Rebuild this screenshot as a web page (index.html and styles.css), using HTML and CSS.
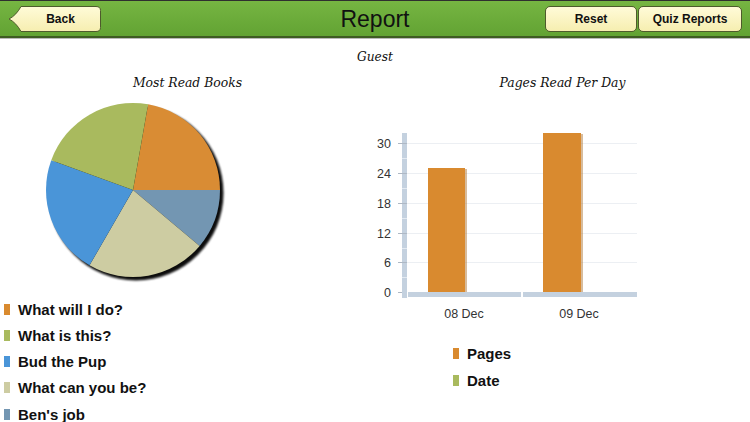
FILE: index.html
```html
<!DOCTYPE html>
<html lang="en">
<head>
    <meta charset="UTF-8">
    <meta name="viewport" content="width=device-width, initial-scale=1.0">
    <title>Report</title>
    <link rel="stylesheet" href="styles.css">
</head>
<body>
    <!-- Top bar -->
    <header class="topbar">
        <div class="bar-left">
            <button type="button" class="back-btn">
                <svg class="back-shape" width="93" height="26" viewBox="0 0 93 26">
                    <defs>
                        <linearGradient id="cream" x1="0" y1="0" x2="0" y2="1">
                            <stop offset="0" stop-color="#fffbd8"/>
                            <stop offset="1" stop-color="#f6eeb0"/>
                        </linearGradient>
                    </defs>
                    <path d="M1 13 C6 10.5 10 6 13 0.5 L88 0.5 Q92.5 0.5 92.5 4.5 L92.5 21.5 Q92.5 25.5 88 25.5 L13 25.5 C10 20 6 15.5 1 13 Z" fill="url(#cream)" stroke="#4e5a2c" stroke-width="1"/>
                </svg>
                <span>Back</span>
            </button>
        </div>
        <h1 class="title">Report</h1>
        <div class="bar-right">
            <button type="button" class="pill-btn reset-btn">Reset</button>
            <button type="button" class="pill-btn quiz-btn">Quiz Reports</button>
        </div>
    </header>

    <div class="guest">Guest</div>

    <div class="charts">
        <!-- Most read books -->
        <div class="col">
            <h3 class="chart-title">Most Read Books</h3>
            <svg class="pie" width="375" height="200" viewBox="0 0 375 200">
                <defs>
                    <filter id="soft" x="-10%" y="-10%" width="120%" height="120%">
                        <feGaussianBlur stdDeviation="1.1"/>
                    </filter>
                </defs>
                <circle cx="136" cy="101" r="87.5" fill="#000" opacity="0.95" filter="url(#soft)"/>
                <path d="M133 98 L148.11 12.32 A87 87 0 0 1 220 98 Z" fill="#d98c34"/>
                <path d="M133 98 L220 98 A87 87 0 0 1 199.65 153.92 Z" fill="#7396b2"/>
                <path d="M133 98 L199.65 153.92 A87 87 0 0 1 89.5 173.34 Z" fill="#cdcca2"/>
                <path d="M133 98 L89.5 173.34 A87 87 0 0 1 51.25 68.24 Z" fill="#4a95d8"/>
                <path d="M133 98 L51.25 68.24 A87 87 0 0 1 148.11 12.32 Z" fill="#a9ba5e"/>
            </svg>
            <ul class="legend books">
                <li><i class="sw orange"></i>What will I do?</li>
                <li><i class="sw green"></i>What is this?</li>
                <li><i class="sw blue"></i>Bud the Pup</li>
                <li><i class="sw tan"></i>What can you be?</li>
                <li><i class="sw slate"></i>Ben's job</li>
            </ul>
        </div>

        <!-- Pages per day -->
        <div class="col">
            <h3 class="chart-title">Pages Read Per Day</h3>
            <svg class="bars" width="375" height="233" viewBox="0 0 375 233">
                <!-- grid -->
                <g stroke="#eceff3" stroke-width="1">
                    <line x1="32" y1="51.5" x2="262" y2="51.5"/>
                    <line x1="32" y1="81.5" x2="262" y2="81.5"/>
                    <line x1="32" y1="111.5" x2="262" y2="111.5"/>
                    <line x1="32" y1="141.5" x2="262" y2="141.5"/>
                    <line x1="32" y1="170.5" x2="262" y2="170.5"/>
                </g>
                <!-- bars -->
                <rect x="55" y="77" width="37" height="123" fill="#b07a3c" opacity="0.5"/>
                <rect x="53" y="76" width="37" height="124" fill="#d98a2f"/>
                <rect x="170" y="42" width="38" height="158" fill="#b07a3c" opacity="0.5"/>
                <rect x="168" y="41" width="38" height="159" fill="#d98a2f"/>
                <!-- axes -->
                <rect x="27" y="41" width="5" height="165" fill="#c4d1df"/>
                <rect x="33" y="200" width="113" height="5" fill="#c4d1df"/>
                <rect x="148" y="200" width="114" height="5" fill="#c4d1df"/>
                <g stroke="#e2e9f1" stroke-width="1">
                    <line x1="27" y1="66.5" x2="32" y2="66.5"/>
                    <line x1="27" y1="96.5" x2="32" y2="96.5"/>
                    <line x1="27" y1="126.5" x2="32" y2="126.5"/>
                    <line x1="27" y1="156.5" x2="32" y2="156.5"/>
                    <line x1="27" y1="185.5" x2="32" y2="185.5"/>
                </g>
                <g stroke="#aeb8c4" stroke-width="1">
                    <line x1="23" y1="51.5" x2="32" y2="51.5"/>
                    <line x1="23" y1="81.5" x2="32" y2="81.5"/>
                    <line x1="23" y1="111.5" x2="32" y2="111.5"/>
                    <line x1="23" y1="141.5" x2="32" y2="141.5"/>
                    <line x1="23" y1="170.5" x2="32" y2="170.5"/>
                    <line x1="23" y1="200.5" x2="27" y2="200.5"/>
                </g>
                <!-- labels -->
                <g class="tick" text-anchor="end">
                    <text x="16" y="55.5">30</text>
                    <text x="16" y="85.5">24</text>
                    <text x="16" y="115.5">18</text>
                    <text x="16" y="145.5">12</text>
                    <text x="16" y="174.5">6</text>
                    <text x="16" y="204.5">0</text>
                </g>
                <g class="tick" text-anchor="middle">
                    <text x="89" y="225.5">08 Dec</text>
                    <text x="204" y="225.5">09 Dec</text>
                </g>
            </svg>
            <ul class="legend days">
                <li><i class="sw orange"></i>Pages</li>
                <li><i class="sw green"></i>Date</li>
            </ul>
        </div>
    </div>
</body>
</html>
```

FILE: styles.css
```css
body {
    margin: 0;
    padding: 0;
    width: 750px;
    height: 422px;
    overflow: hidden;
    background: #fff;
    font-family: "Liberation Sans", Arial, sans-serif;
    color: #111;
}

.topbar {
    box-sizing: border-box;
    height: 38px;
    display: grid;
    grid-template-columns: 1fr auto 1fr;
    align-items: center;
    padding: 0 8px;
    background: linear-gradient(#76b542, #62a333);
    border-top: 1px solid #2f2f2f;
    border-bottom: 2px solid #3e5c22;
    box-shadow: 0 1px 0 #b9b9b9;
}

.bar-left {
    display: flex;
}

.bar-right {
    display: flex;
    justify-content: flex-end;
    gap: 1px;
}

.title {
    margin: 0;
    font-size: 23px;
    font-weight: normal;
    color: #111;
    line-height: 26px;
}

button {
    font-family: "Liberation Sans", Arial, sans-serif;
    font-weight: bold;
    font-size: 12px;
    color: #111;
    cursor: pointer;
}

.back-btn {
    position: relative;
    width: 93px;
    height: 26px;
    padding: 0 0 0 12px;
    border: none;
    background: none;
}

.back-shape {
    position: absolute;
    left: 0;
    top: 0;
}

.back-btn span {
    position: relative;
}

.pill-btn {
    height: 26px;
    padding: 0;
    border: 1px solid #4e5a2c;
    border-radius: 5px;
    background: linear-gradient(#fffbd8, #f6eeb0);
}

.reset-btn {
    width: 92px;
}

.quiz-btn {
    width: 104px;
}

.guest {
    margin-top: 11px;
    line-height: 16px;
    text-align: center;
    font-family: "DejaVu Serif", serif;
    font-style: italic;
    font-size: 12.2px;
    color: #111;
}

.charts {
    display: flex;
}

.col {
    width: 375px;
}

.chart-title {
    margin: 10px 0 0;
    line-height: 16px;
    text-align: center;
    font-family: "DejaVu Serif", serif;
    font-style: italic;
    font-weight: normal;
    font-size: 12.4px;
    color: #111;
}

.pie, .bars {
    display: block;
    margin-top: 1px;
}

.tick {
    font-family: "Liberation Sans", Arial, sans-serif;
    font-size: 12.5px;
    fill: #333;
}

.legend {
    list-style: none;
    margin: 0;
    font-weight: bold;
    font-size: 15px;
    color: #111;
}

.legend li {
    display: flex;
    align-items: center;
    gap: 8px;
}

.books {
    margin-top: 4px;
    padding: 0 0 0 4px;
}

.books li {
    height: 26.25px;
}

.days {
    margin-top: 15px;
    padding: 0 0 0 78px;
}

.days li {
    height: 27px;
}

.sw {
    display: block;
    width: 6px;
    height: 11px;
}

.orange { background: #d98a2f; }
.green { background: #a9ba5e; }
.blue { background: #4a95d8; }
.tan { background: #cdcca2; }
.slate { background: #7396b2; }
```
